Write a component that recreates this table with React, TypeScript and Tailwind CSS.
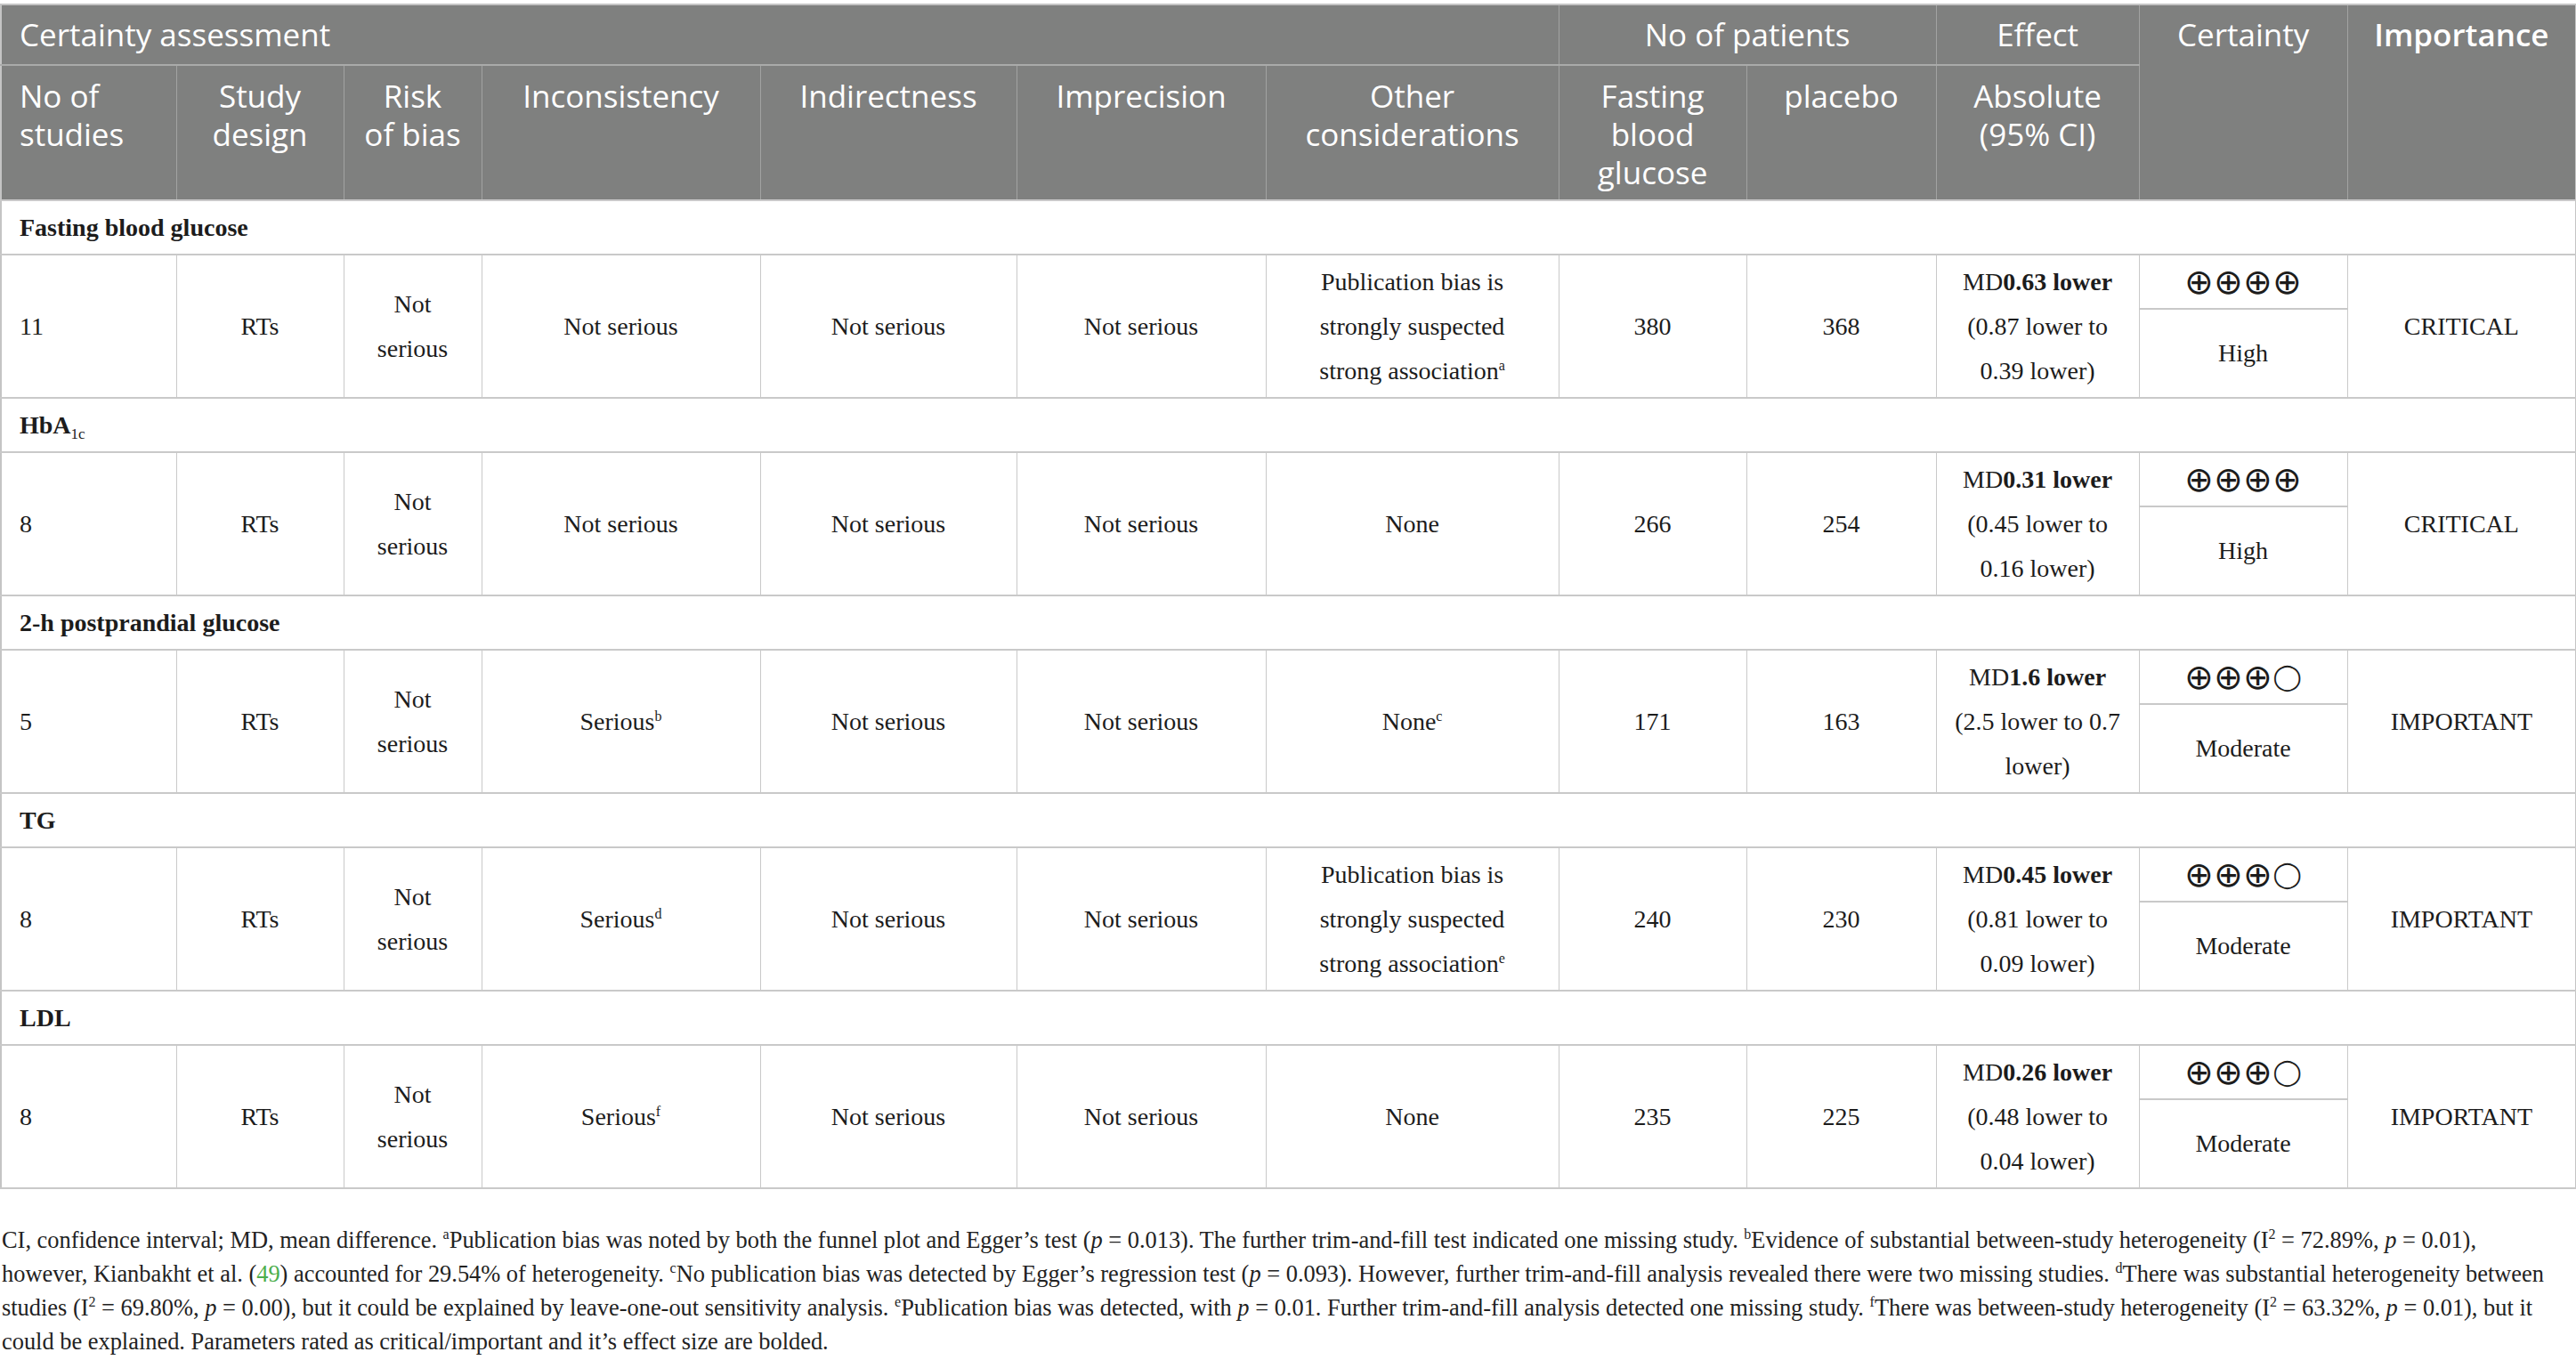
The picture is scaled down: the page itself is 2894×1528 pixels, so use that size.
import React from "react";

type Row = {
  label: React.ReactNode;
  studies: string;
  inconsistency: React.ReactNode;
  other: React.ReactNode;
  fbg: string;
  placebo: string;
  md: string;
  ci: string[];
  symbols: string[];
  certainty: string;
  importance: string;
};

const sup = (s: string) => <sup className="text-[16px] relative -top-[10px]">{s}</sup>;

const pubBias = (mark: string) => (
  <>
    <span className="block">Publication bias is</span>
    <span className="block">strongly suspected</span>
    <span className="block">strong association{sup(mark)}</span>
  </>
);

const high = ["⊕", "⊕", "⊕", "⊕"];
const moderate = ["⊕", "⊕", "⊕", "◯"];

const rows: Row[] = [
  {
    label: "Fasting blood glucose",
    studies: "11",
    inconsistency: "Not serious",
    other: pubBias("a"),
    fbg: "380",
    placebo: "368",
    md: "0.63 lower",
    ci: ["(0.87 lower to", "0.39 lower)"],
    symbols: high,
    certainty: "High",
    importance: "CRITICAL",
  },
  {
    label: (
      <>
        HbA<sub className="text-[17px] font-normal relative top-[6px]">1c</sub>
      </>
    ),
    studies: "8",
    inconsistency: "Not serious",
    other: "None",
    fbg: "266",
    placebo: "254",
    md: "0.31 lower",
    ci: ["(0.45 lower to", "0.16 lower)"],
    symbols: high,
    certainty: "High",
    importance: "CRITICAL",
  },
  {
    label: "2-h postprandial glucose",
    studies: "5",
    inconsistency: <>Serious{sup("b")}</>,
    other: <>None{sup("c")}</>,
    fbg: "171",
    placebo: "163",
    md: "1.6 lower",
    ci: ["(2.5 lower to 0.7", "lower)"],
    symbols: moderate,
    certainty: "Moderate",
    importance: "IMPORTANT",
  },
  {
    label: "TG",
    studies: "8",
    inconsistency: <>Serious{sup("d")}</>,
    other: pubBias("e"),
    fbg: "240",
    placebo: "230",
    md: "0.45 lower",
    ci: ["(0.81 lower to", "0.09 lower)"],
    symbols: moderate,
    certainty: "Moderate",
    importance: "IMPORTANT",
  },
  {
    label: "LDL",
    studies: "8",
    inconsistency: <>Serious{sup("f")}</>,
    other: "None",
    fbg: "235",
    placebo: "225",
    md: "0.26 lower",
    ci: ["(0.48 lower to", "0.04 lower)"],
    symbols: moderate,
    certainty: "Moderate",
    importance: "IMPORTANT",
  },
];

const widths = [197, 188, 155, 313, 288, 280, 329, 211, 213, 228, 234, 257];

const th = "border border-[#a2a3a2] align-top font-normal";
const td = "border-x border-x-[#c9c9c9] border-y-2 border-y-[#c9c9c9] align-middle text-center";

const P = () => <i>p</i>;

export default function App() {
  return (
    <div className="w-[2894px] min-h-[1528px] bg-white pt-[4px] text-[#1c1c1c]">
      <table
        className="table-fixed border-collapse border-2 border-[#c4c4c4] w-[2893px]"
        style={{ fontFamily: '"Liberation Serif", "Times New Roman", serif' }}
      >
        <colgroup>
          {widths.map((w, i) => (
            <col key={i} style={{ width: w }} />
          ))}
        </colgroup>
        <thead
          className="bg-[#7f807f] text-white text-[35px] leading-[43px]"
          style={{ fontFamily: '"Open Sans", "Liberation Sans", sans-serif' }}
        >
          <tr className="h-[68px]">
            <th colSpan={7} className={`${th} text-left pl-[20px] pt-[11px] border-b-2 border-b-[#a9aaa9]`}>
              Certainty assessment
            </th>
            <th colSpan={2} className={`${th} text-center pt-[11px] border-b-2 border-b-[#a9aaa9]`}>
              No of patients
            </th>
            <th className={`${th} text-center pt-[11px] border-b-2 border-b-[#a9aaa9]`}>Effect</th>
            <th rowSpan={2} className={`${th} text-center pt-[11px]`}>
              Certainty
            </th>
            <th rowSpan={2} className={`${th} text-center pt-[11px] !font-semibold`}>
              Importance
            </th>
          </tr>
          <tr className="h-[152px]">
            <th className={`${th} text-left pl-[20px] pt-[12px]`}>
              No of
              <br />
              studies
            </th>
            <th className={`${th} text-center pt-[12px]`}>
              Study
              <br />
              design
            </th>
            <th className={`${th} text-center pt-[12px]`}>
              Risk
              <br />
              of bias
            </th>
            <th className={`${th} text-center pt-[12px]`}>Inconsistency</th>
            <th className={`${th} text-center pt-[12px]`}>Indirectness</th>
            <th className={`${th} text-center pt-[12px]`}>Imprecision</th>
            <th className={`${th} text-center pt-[12px]`}>
              Other
              <br />
              considerations
            </th>
            <th className={`${th} text-center pt-[12px]`}>
              Fasting
              <br />
              blood
              <br />
              glucose
            </th>
            <th className={`${th} text-center pt-[12px]`}>placebo</th>
            <th className={`${th} text-center pt-[12px]`}>
              Absolute
              <br />
              (95% CI)
            </th>
          </tr>
        </thead>
        <tbody className="text-[28px] leading-[50px]">
          {rows.map((r, i) => (
            <React.Fragment key={i}>
              <tr className="h-[61px]">
                <td colSpan={12} className="border-y-2 border-[#c9c9c9] text-left pl-[20px] font-bold align-middle">
                  {r.label}
                </td>
              </tr>
              <tr className="h-[161px]">
                <td className={`${td} !text-left pl-[20px]`}>{r.studies}</td>
                <td className={td}>RTs</td>
                <td className={td}>
                  Not
                  <br />
                  serious
                </td>
                <td className={td}>{r.inconsistency}</td>
                <td className={td}>Not serious</td>
                <td className={td}>Not serious</td>
                <td className={td}>{r.other}</td>
                <td className={td}>{r.fbg}</td>
                <td className={td}>{r.placebo}</td>
                <td className={td}>
                  <span className="block">
                    MD<b>{r.md}</b>
                  </span>
                  {r.ci.map((c, j) => (
                    <span key={j} className="block">
                      {c}
                    </span>
                  ))}
                </td>
                <td className={`${td} p-0`}>
                  <div className="flex flex-col h-[159px]">
                    <div className="h-[61px] flex items-center justify-center border-b-2 border-[#c9c9c9]">
                      <div
                        className="flex items-center leading-none"
                        style={{ fontFamily: '"DejaVu Sans", sans-serif' }}
                      >
                        {r.symbols.map((s, k) =>
                          s === "⊕" ? (
                            <span key={k} className="w-[33px] text-center text-[39px]">
                              {s}
                            </span>
                          ) : (
                            <span key={k} className="w-[33px] text-center text-[29px]">
                              {s}
                            </span>
                          )
                        )}
                      </div>
                    </div>
                    <div className="flex-1 flex items-center justify-center">{r.certainty}</div>
                  </div>
                </td>
                <td className={td}>{r.importance}</td>
              </tr>
            </React.Fragment>
          ))}
        </tbody>
      </table>

      <div
        className="mt-[38px] pl-[2px] text-[26.4px] leading-[38px] text-[#222]"
        style={{ fontFamily: '"Liberation Serif", "Times New Roman", serif' }}
      >
        <p className="whitespace-nowrap">
          CI, confidence interval; MD, mean difference. {sup("a")}Publication bias was noted by both the funnel plot and
          Egger’s test (<P /> = 0.013). The further trim-and-fill test indicated one missing study. {sup("b")}Evidence of
          substantial between-study heterogeneity (I{sup("2")} = 72.89%, <P /> = 0.01),
        </p>
        <p className="whitespace-nowrap">
          however, Kianbakht et al. (<span className="text-[#4cae4c]">49</span>) accounted for 29.54% of heterogeneity.{" "}
          {sup("c")}No publication bias was detected by Egger’s regression test (<P /> = 0.093). However, further
          trim-and-fill analysis revealed there were two missing studies. {sup("d")}There was substantial heterogeneity
          between
        </p>
        <p className="whitespace-nowrap">
          studies (I{sup("2")} = 69.80%, <P /> = 0.00), but it could be explained by leave-one-out sensitivity analysis.{" "}
          {sup("e")}Publication bias was detected, with <P /> = 0.01. Further trim-and-fill analysis detected one missing
          study. {sup("f")}There was between-study heterogeneity (I{sup("2")} = 63.32%, <P /> = 0.01), but it
        </p>
        <p className="whitespace-nowrap">
          could be explained. Parameters rated as critical/important and it’s effect size are bolded.
        </p>
      </div>
    </div>
  );
}
